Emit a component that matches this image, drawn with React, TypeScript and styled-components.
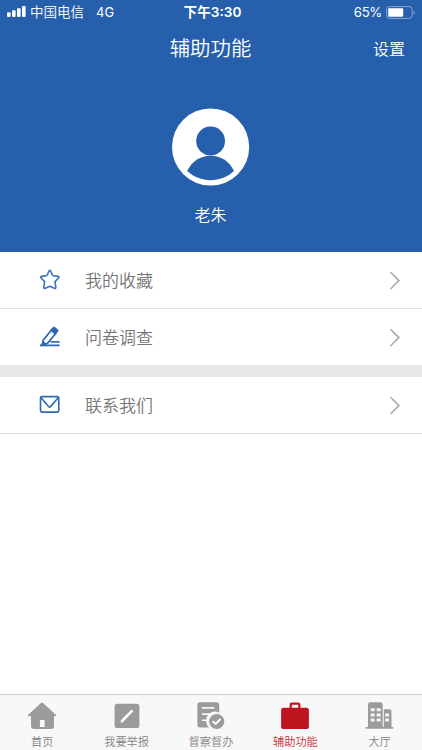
import React from "react";
import styled, { createGlobalStyle } from "styled-components";

const BLUE = "#2660ac";

const GlobalStyle = createGlobalStyle`
  * { box-sizing: border-box; }
  body { margin: 0; background: #fff; font-family: "Inter", "Noto Sans CJK SC", sans-serif; }
  svg { display: block; flex: none; }
`;

const Screen = styled.div`
  width: 422px;
  height: 750px;
  display: flex;
  flex-direction: column;
  background: #fff;
  overflow: hidden;
`;

const Header = styled.header`
  height: 252px;
  background: ${BLUE};
  color: #fff;
  flex: none;
`;

const StatusBar = styled.div`
  height: 24px;
  display: grid;
  grid-template-columns: 1fr auto 1fr;
  align-items: center;
  padding: 0 6px 0 7px;
  font-size: 13.5px;
  line-height: 24px;
`;

const StatusGroup = styled.div<{ $end?: boolean }>`
  display: flex;
  align-items: center;
  gap: 4px;
  font-weight: 350;
  justify-content: ${(p) => (p.$end ? "flex-end" : "flex-start")};
`;

const Network = styled.span`
  margin-left: 8px;
  font-size: 13px;
  font-weight: 400;
`;

const Percent = styled.span`
  font-size: 13.2px;
  font-weight: 400;
  letter-spacing: -0.3px;
`;

const Clock = styled.span`
  margin-left: 2px;
  font-weight: 600;
  font-size: 13.6px;
`;

const NavBar = styled.div`
  height: 48px;
  display: grid;
  grid-template-columns: 1fr auto 1fr;
  align-items: center;
  padding: 0 17px;
`;

const Title = styled.h1`
  grid-column: 2;
  margin: 0 1px 0 0;
  padding-top: 1px;
  font-size: 20.4px;
  font-weight: 350;
  line-height: 47px;
`;

const Settings = styled.span`
  justify-self: end;
  font-size: 16px;
  font-weight: 350;
`;

const Profile = styled.div`
  display: flex;
  flex-direction: column;
  align-items: center;
  padding: 36px 1px 0 0;
`;

const UserName = styled.span`
  margin-top: 17px;
  font-size: 16px;
  line-height: 24px;
  font-weight: 350;
`;

const Menu = styled.main`
  flex: 1;
`;

const MenuRow = styled.div<{ $last?: boolean }>`
  height: ${(p) => (p.$last ? 56 : 57)}px;
  display: flex;
  align-items: center;
  padding: 0 21px 0 39px;
  border-bottom: ${(p) => (p.$last ? "none" : "1px solid #e1e1e1")};
`;

const MenuLabel = styled.span`
  flex: 1;
  margin-left: 24px;
  padding-top: 2px;
  color: #757575;
  font-size: 17px;
  line-height: 24px;
  font-weight: 350;
`;

const Divider = styled.div`
  height: 12px;
  background: #e7e7e7;
`;

const TabBar = styled.nav`
  height: 56px;
  flex: none;
  display: grid;
  grid-template-columns: repeat(5, 1fr);
  background: #f8f8f8;
  border-top: 1px solid #cfcfcf;
`;

const Tab = styled.div<{ $active?: boolean }>`
  display: flex;
  flex-direction: column;
  align-items: center;
  padding-top: 6px;
  color: ${(p) => (p.$active ? "#be141f" : "#9b9b9b")};
`;

const TabLabel = styled.span<{ $active?: boolean }>`
  margin-top: 3px;
  font-size: 11.2px;
  line-height: 16px;
  white-space: nowrap;
  font-weight: 350;
  color: ${(p) => (p.$active ? "#c4303a" : "#828282")};
`;

const Signal = () => (
  <svg width="19" height="12" viewBox="0 0 19 12" fill="#fff">
    <rect x="0" y="6.3" width="3.6" height="4.7" rx="1" />
    <rect x="5" y="4.3" width="3.6" height="6.7" rx="1" />
    <rect x="10" y="2.2" width="3.6" height="8.8" rx="1" />
    <rect x="15" y="0" width="3.6" height="11" rx="1" />
  </svg>
);

const Battery = () => (
  <svg width="30" height="13" viewBox="0 0 30 13">
    <rect x="0.6" y="0.6" width="25.6" height="11.8" rx="3" fill="none" stroke="#85a6d2" strokeWidth="1" />
    <rect x="2.2" y="2.2" width="15" height="8.6" rx="1" fill="#fff" />
    <path d="M27.6 4.6Q30.2 6.5 27.6 8.4Z" fill="#85a6d2" />
  </svg>
);

const Avatar = () => (
  <svg width="78" height="78" viewBox="0 0 78 78">
    <circle cx="38.6" cy="39" r="38.6" fill="#fff" />
    <circle cx="38.6" cy="33" r="14.4" fill={BLUE} />
    <path d="M15.2 63C20.1 53 28.6 47.8 38.6 47.8S57.1 53 62 63C55.6 69 47.6 72.2 38.6 72.2S21.6 69 15.2 63Z" fill={BLUE} />
  </svg>
);

const Star = () => (
  <svg width="22" height="22" viewBox="0 0 22 22" fill="none" stroke="#3b73bc" strokeWidth="1.6" strokeLinejoin="round">
    <path d="M10 2.1Q10.8.6 11.6 2.1L13.7 6.5 19 7.4Q20.7 7.8 19.5 9L16 12.6 16.8 18.3Q16.9 20 15.3 19.3L10.8 17.2 6.3 19.3Q4.7 20 4.8 18.3L5.6 12.6 2.1 9Q.9 7.8 2.6 7.4L7.9 6.5Z" />
  </svg>
);

const Pencil = () => (
  <svg width="22" height="22" viewBox="0 0 22 22" fill="none" stroke="#3069b2">
    <path d="M4.2 14.1 12.7 3.8 16.9 7.2 8.4 17.4 3.5 18.7Z" strokeWidth="1.7" strokeLinejoin="round" />
    <path d="M11.4 4.3 13.6 1.6Q14.8.5 15.8 1.2L18.8 3.8Q19.6 4.6 18.8 5.5L16.4 8.5Z" fill="#2d65ae" strokeWidth=".7" />
    <path d="M3.8 15 2.8 19.4 7.2 18.2Z" fill="#3069b2" />
    <path d="M1 19.4H20.6" strokeWidth="1.8" />
    <path d="M11.5 15.9H20.6" strokeWidth="1.7" />
  </svg>
);

const Envelope = () => (
  <svg width="22" height="22" viewBox="0 0 22 22" fill="none" stroke="#3269b4" strokeWidth="1.6" strokeLinejoin="round">
    <rect x="1.5" y="2.6" width="18.3" height="15.5" rx="1.5" />
    <path d="M1.9 3.5 10 12.9Q10.6 13.4 11.2 12.9L19.4 3.5" />
  </svg>
);

const Chevron = () => (
  <svg width="12" height="20" viewBox="0 0 12 20" fill="none" stroke="#a9a9a9" strokeWidth="1.6">
    <path d="M1.5 2.2 9.9 10.6 1.5 19" />
  </svg>
);

const HomeIcon = () => (
  <svg width="30" height="30" viewBox="0 0 30 30">
    <path fill="currentColor" fillRule="evenodd" d="M14 2Q15 .9 16 2L29.1 14Q29.5 15 28.6 15H27V25Q27 28 24 28H7Q4 28 4 25V15H1.4Q.5 15 .9 14ZM13.2 19Q12.9 19 12.9 19.5V26H17.6V19.5Q17.6 19 17.1 19Z" />
  </svg>
);

const ReportIcon = () => (
  <svg width="30" height="30" viewBox="0 0 30 30">
    <rect x="2.6" y="2.7" width="24.8" height="24.4" rx="2.6" fill="currentColor" />
    <path d="M10 20 19.8 10.2" stroke="#fff" strokeWidth="2.6" strokeLinecap="round" />
    <path d="M8.7 21.5 9.2 18.9 11.3 20.9Z" fill="#fff" />
  </svg>
);

const ReviewIcon = () => (
  <svg width="30" height="30" viewBox="0 0 30 30">
    <path fill="currentColor" d="M4 1.3H20.6Q23.2 1.3 23.2 3.8V11.7A9 9 0 0 0 13 26.4H4Q1.4 26.4 1.4 23.9V3.8Q1.4 1.3 4 1.3Z" />
    <path d="M5.9 6.9H18.4M5.9 13.1H14M5.9 19.3H10.2" stroke="#f8f8f8" strokeWidth="1.6" />
    <circle cx="20.7" cy="20.5" r="7.6" fill="currentColor" />
    <path d="M16.7 20.2 19.7 23 24.5 18" fill="none" stroke="#fff" strokeWidth="1.9" />
  </svg>
);

const BriefcaseIcon = () => (
  <svg width="30" height="30" viewBox="0 0 30 30">
    <path d="M10.7 8V3.8Q10.7 2.6 12 2.6H18Q19.3 2.6 19.3 3.8V8" fill="none" stroke="currentColor" strokeWidth="2.2" />
    <rect x="1.1" y="6.8" width="27.8" height="21.2" rx="2.6" fill="currentColor" />
  </svg>
);

const HallIcon = () => (
  <svg width="30" height="30" viewBox="0 0 30 30">
    <path fill="currentColor" d="M3 3.5Q3 1.3 5.2 1.3H15.5Q17.7 1.3 17.7 3.5V26H18.8V8.2H24.4Q26.5 8.2 26.5 10.3V26H28.2V27.8H.8V26H3Z" />
    <path d="M5.7 7.3H9.6V10.2H5.7ZM11.7 7.3H15.6V10.2H11.7ZM5.7 12.5H9.6V15.4H5.7ZM11.7 12.5H15.6V15.4H11.7ZM5.7 17.6H9.6V20.5H5.7ZM11.7 17.6H15.6V20.5H11.7ZM20.2 12.5H24V15.4H20.2ZM20.2 17.6H24V20.5H20.2Z" fill="#f8f8f8" />
  </svg>
);

const tabs = [
  { label: "首页", icon: <HomeIcon /> },
  { label: "我要举报", icon: <ReportIcon /> },
  { label: "督察督办", icon: <ReviewIcon /> },
  { label: "辅助功能", icon: <BriefcaseIcon />, active: true },
  { label: "大厅", icon: <HallIcon /> },
];

const Row = ({ icon, label, last }: { icon: React.ReactNode; label: string; last?: boolean }) => (
  <MenuRow $last={last}>
    {icon}
    <MenuLabel>{label}</MenuLabel>
    <Chevron />
  </MenuRow>
);

export default function App() {
  return (
    <>
      <GlobalStyle />
      <Screen>
        <Header>
          <StatusBar>
            <StatusGroup>
              <Signal />
              <span>中国电信</span>
              <Network>4G</Network>
            </StatusGroup>
            <Clock>下午3:30</Clock>
            <StatusGroup $end>
              <Percent>65%</Percent>
              <Battery />
            </StatusGroup>
          </StatusBar>
          <NavBar>
            <Title>辅助功能</Title>
            <Settings>设置</Settings>
          </NavBar>
          <Profile>
            <Avatar />
            <UserName>老朱</UserName>
          </Profile>
        </Header>
        <Menu>
          <Row icon={<Star />} label="我的收藏" />
          <Row icon={<Pencil />} label="问卷调查" last />
          <Divider />
          <Row icon={<Envelope />} label="联系我们" />
        </Menu>
        <TabBar>
          {tabs.map((tab) => (
            <Tab key={tab.label} $active={tab.active}>
              {tab.icon}
              <TabLabel $active={tab.active}>{tab.label}</TabLabel>
            </Tab>
          ))}
        </TabBar>
      </Screen>
    </>
  );
}
